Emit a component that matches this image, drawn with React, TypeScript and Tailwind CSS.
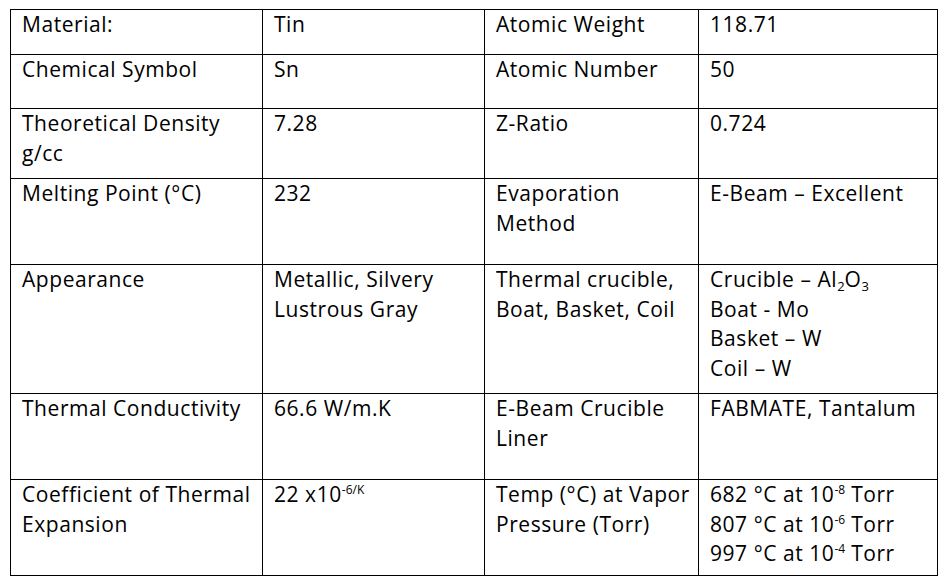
import React from "react";

type Cell = React.ReactNode;

const Sup = ({ children }: { children: React.ReactNode }) => (
  <span className="relative -top-[8px] text-[12px] leading-none tracking-normal">{children}</span>
);

const Sub = ({ children }: { children: React.ReactNode }) => (
  <span className="relative top-[4px] text-[13px] leading-none tracking-normal">{children}</span>
);

const rows: { h: string; cells: Cell[] }[] = [
  { h: "h-[45px]", cells: ["Material:", "Tin", "Atomic Weight", "118.71"] },
  { h: "h-[54px]", cells: ["Chemical Symbol", "Sn", "Atomic Number", "50"] },
  {
    h: "h-[70px]",
    cells: [
      <>Theoretical Density<br />g/cc</>,
      "7.28",
      "Z-Ratio",
      "0.724",
    ],
  },
  {
    h: "h-[86px]",
    cells: ["Melting Point (°C)", "232", <>Evaporation<br />Method</>, "E-Beam – Excellent"],
  },
  {
    h: "h-[129px]",
    cells: [
      "Appearance",
      <>Metallic, Silvery<br />Lustrous Gray</>,
      <>Thermal crucible,<br />Boat, Basket, Coil</>,
      <>
        Crucible – Al<Sub>2</Sub>O<Sub>3</Sub>
        <br />Boat - Mo
        <br />Basket – W
        <br />Coil – W
      </>,
    ],
  },
  {
    h: "h-[86px]",
    cells: ["Thermal Conductivity", "66.6 W/m.K", <>E-Beam Crucible<br />Liner</>, "FABMATE, Tantalum"],
  },
  {
    h: "h-[96px]",
    cells: [
      <>Coefficient of Thermal<br />Expansion</>,
      <>22 x10<Sup>-6/K</Sup></>,
      <>Temp (°C) at Vapor<br />Pressure (Torr)</>,
      <>
        682 °C at 10<Sup>-8</Sup> Torr
        <br />807 °C at 10<Sup>-6</Sup> Torr
        <br />997 °C at 10<Sup>-4</Sup> Torr
      </>,
    ],
  },
];

export default function App() {
  return (
    <div className="w-[949px] h-[586px] bg-white pl-[10px] pt-[9px] font-['Open_Sans',sans-serif] text-black">
      <table className="table-fixed border-collapse w-[927px]">
        <colgroup>
          <col className="w-[252px]" />
          <col className="w-[222px]" />
          <col className="w-[214px]" />
          <col className="w-[239px]" />
        </colgroup>
        <tbody>
          {rows.map((r, i) => (
            <tr key={i} className={r.h}>
              {r.cells.map((c, j) => (
                <td
                  key={j}
                  className="border border-black align-top pl-[11px] pr-1 pt-0 text-[21px] tracking-[0.55px] leading-[29.5px] whitespace-nowrap"
                >
                  {c}
                </td>
              ))}
            </tr>
          ))}
        </tbody>
      </table>
    </div>
  );
}
